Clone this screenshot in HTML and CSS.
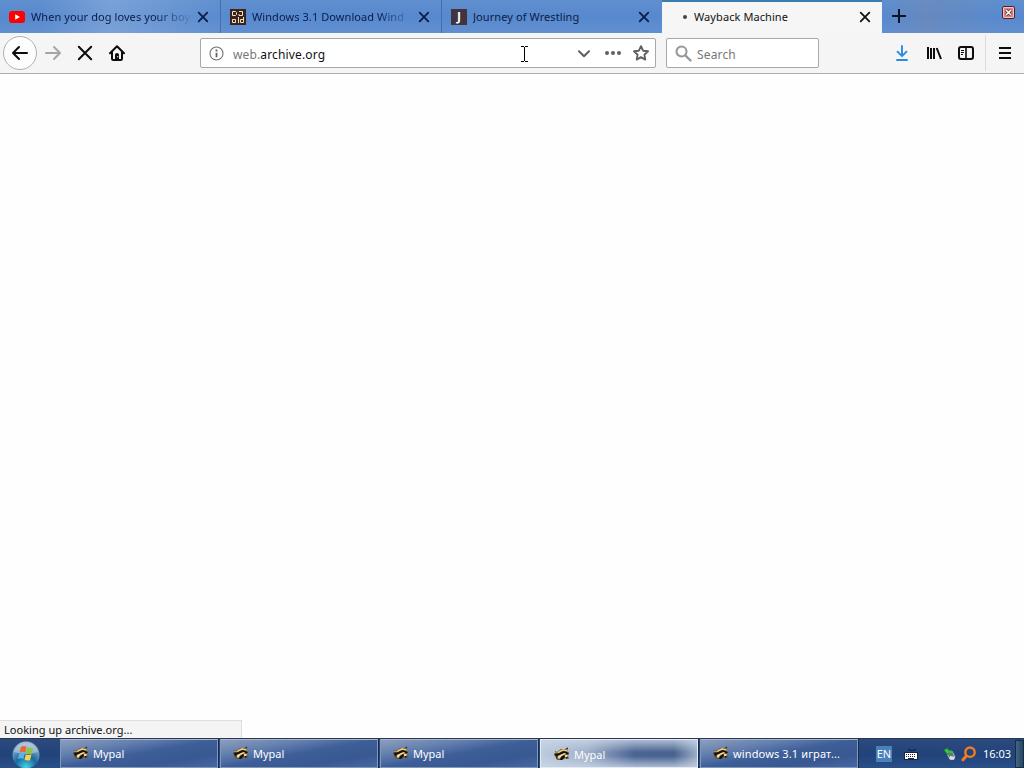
FILE: index.html
```html
<!DOCTYPE html>
<html lang="en">
<head>
  <meta charset="UTF-8">
  <title>Wayback Machine</title>
  <link rel="stylesheet" href="styles.css">
</head>
<body>

  <!-- shared icons -->
  <svg class="defs">
    <symbol id="close" viewBox="0 0 12 12"><path d="M1.700 1.700l8.600 8.600M10.300 1.700l-8.600 8.600" fill="none" stroke="currentColor" stroke-width="1.800" stroke-linecap="round"/></symbol>
    <symbol id="raccoon" viewBox="0 0 16 16">
      <path d="M1 5l2 1 4-3 4 0 3-2-1 3 2 3-1 3 1 3-3-1-2 1-2 1-4 0-2-1 0-3-3-1 2-2z" fill="#6b542f"/>
      <path d="M5 5l4-2 4 1 1 2-3-1-3 1-4 2-1-1z" fill="#e6c681"/>
      <path d="M1 8l4-1 4-2 4 1 2 2-3 0-2-1-3 2-4 1-1 2z" fill="#17130e"/>
      <path d="M4 10l4-2 3-1 1 1-4 2-3 3-1-1zM11 9l3 0-1 2-2 0zM1 6l2 0-1 1z" fill="#f3d99b"/>
      <path d="M7 11l3-2 1 1-1 2-2 2-2 0zM13 2l1 0-1 2zM12 11l2 1-2 1z" fill="#15110d"/>
    </symbol>
  </svg>

  <div class="tabs">
    <div class="tab">
      <svg class="favicon" viewBox="0 0 16 16"><rect x="0" y="2" width="16" height="12" rx="3" fill="#f00"/><path d="M6.200 5.200v5.600L11 8z" fill="#fff"/></svg>
      <span class="title fade">When your dog loves your boy</span>
      <svg class="close"><use href="#close"/></svg>
    </div>
    <div class="tab">
      <svg class="favicon" viewBox="0 0 16 16"><rect width="16" height="16" fill="#39231a"/><path d="M2.500 2.500h3l1 1v2l-1 1h-3zM9 2.500h3.500v4h-3.500v-1.500M2.500 10.500h3v3h-3zM8.500 8v6M13.500 8v5.500h-3v-3h3" fill="none" stroke="#f4e3c4"/></svg>
      <span class="title fade">Windows 3.1 Download Wind</span>
      <svg class="close"><use href="#close"/></svg>
    </div>
    <div class="tab">
      <span class="favicon letter">J</span>
      <span class="title">Journey of Wrestling</span>
      <svg class="close"><use href="#close"/></svg>
    </div>
    <div class="tab active">
      <span class="dot"></span>
      <span class="title">Wayback Machine</span>
      <svg class="close"><use href="#close"/></svg>
    </div>
    <svg class="new-tab" viewBox="0 0 14 14"><path d="M7 .5v13M.5 7h13" stroke="#0b1326" stroke-width="2" fill="none" stroke-linecap="round"/></svg>
    <svg class="win-close" viewBox="0 0 13 13"><rect x=".5" y=".5" width="12" height="12" rx="1.500" fill="#f5c4c0" stroke="#4e1e2b"/><rect x="2" y="2" width="9" height="9" fill="#d98482"/><path d="M4 4l5 5M9 4l-5 5" stroke="#51202a" stroke-width="3"/><path d="M4 4l5 5M9 4l-5 5" stroke="#fff" stroke-width="1.600"/></svg>
  </div>

  <div class="toolbar">
    <div class="back"><svg width="18" height="16" viewBox="0 0 18 16"><path d="M8 2L2 8l6 6M2 8h14" fill="none" stroke="#0c0c0d" stroke-width="2" stroke-linecap="round" stroke-linejoin="round"/></svg></div>
    <svg class="forward" width="18" height="16" viewBox="0 0 18 16"><path d="M9 2l6 6-6 6M15 8H1" fill="none" stroke="#a5a5a6" stroke-width="2" stroke-linecap="round" stroke-linejoin="round"/></svg>
    <svg class="stop" width="16" height="16" viewBox="0 0 16 16"><path d="M1.800 1.800l12.400 12.400M14.200 1.800L1.800 14.200" stroke="#0c0c0d" stroke-width="2" stroke-linecap="round"/></svg>
    <svg class="home" width="16" height="16" viewBox="0 0 16 16"><path d="M1 8.300L8 1.300l7 7M3 7.500v6.200q0 1.300 1.300 1.300h7.400q1.300 0 1.300-1.300V7.500" fill="none" stroke="#0c0c0d" stroke-width="2" stroke-linecap="round" stroke-linejoin="round"/><path d="M6 15V9.500Q6 8 8 8t2 1.500V15z" fill="#0c0c0d"/><rect x="8.200" y="11" width="1" height="1.300" fill="#f5f5f5"/></svg>

    <div class="urlbar">
      <svg class="info" width="15" height="15" viewBox="0 0 15 15"><circle cx="7.500" cy="7.500" r="6.500" fill="none" stroke="#707073" stroke-width="1.100"/><path d="M7.500 6.700v4.500M7.500 3.500v2" stroke="#606063" stroke-width="1.800"/></svg>
      <span class="url"><span class="sub">web.</span>archive.org</span>
      <svg class="caret" width="9" height="16" viewBox="0 0 9 16"><path d="M1 .5h2.500l1 1 1-1H8M4.500 1.500v13M1 15.500h2.500l1-1 1 1H8" fill="none" stroke="#000" shape-rendering="crispEdges"/></svg>
      <svg class="drop" width="12" height="8" viewBox="0 0 12 8"><path d="M1 1.200l5 5 5-5" fill="none" stroke="#606064" stroke-width="2" stroke-linecap="round" stroke-linejoin="round"/></svg>
      <svg class="dots" width="16" height="4" viewBox="0 0 16 4"><g fill="#606064"><circle cx="2" cy="2" r="2"/><circle cx="8" cy="2" r="2"/><circle cx="14" cy="2" r="2"/></g></svg>
      <svg class="star" width="16" height="16" viewBox="0 0 16 16"><path d="M8 1.200l2.100 4.500 4.900.6-3.600 3.400.9 4.900L8 12.200l-4.300 2.400.9-4.900L1 6.300l4.900-.6z" fill="none" stroke="#606064" stroke-width="1.900" stroke-linejoin="round"/></svg>
    </div>

    <div class="search">
      <svg width="17" height="17" viewBox="0 0 17 17"><circle cx="6.500" cy="6.500" r="5" fill="none" stroke="#98989a" stroke-width="2.100"/><path d="M10.300 10.300l5.200 5.200" stroke="#98989a" stroke-width="2.400" stroke-linecap="round"/></svg>
      <span>Search</span>
    </div>

    <div class="actions">
      <svg width="14" height="16" viewBox="0 0 14 16"><path d="M7 1v10M2.500 6.700L7 11.200l4.500-4.500M2 15h10" fill="none" stroke="#2b8ae2" stroke-width="1.900" stroke-linecap="round" stroke-linejoin="round"/></svg>
      <svg class="library" width="16" height="16" viewBox="0 0 16 16"><path d="M2 2v12M5 3v11M8 3v11M10.700 3L15 14" fill="none" stroke="#0c0c0d" stroke-width="2"/></svg>
      <svg class="sidebar" width="16" height="14" viewBox="0 0 16 14"><rect x="1" y="1" width="14" height="12" rx="2" fill="none" stroke="#0c0c0d" stroke-width="2"/><path d="M8 1v12" stroke="#0c0c0d" stroke-width="1.600"/><path d="M3 4.500h3M3 6.500h3M3 8.500h2" stroke="#0c0c0d"/></svg>
      <span class="divider"></span>
      <svg width="12" height="12" viewBox="0 0 12 12"><path d="M0 1h12M0 6h12M0 11h12" stroke="#0c0c0d" stroke-width="2"/></svg>
    </div>
  </div>

  <div class="page">
    <div class="status"><span>Looking up archive.org...</span></div>
  </div>

  <div class="taskbar">
    <div class="start">
      <svg width="28" height="28" viewBox="0 0 28 28">
        <defs><radialGradient id="orb" cx=".5" cy=".95" r=".9"><stop offset="0" stop-color="#45d2ec"/><stop offset=".45" stop-color="#1b6a9b"/><stop offset="1" stop-color="#a2bad3"/></radialGradient></defs>
        <circle cx="14" cy="15" r="13.500" fill="url(#orb)"/>
        <path d="M2 12a12.500 12.500 0 0 1 24 0q-12 4-24 0z" fill="#c6d7e6" opacity=".55"/>
        <path d="M9 7q3-2 5.500 0l-1.300 5.500q-3-1.500-5.700.2z" fill="#f0642c"/>
        <path d="M15.600 7.500q2.800 1.500 5.600.3l-1.600 5.700q-2.500 1.200-5.300-.4z" fill="#8cc63c"/>
        <path d="M7.200 13.700q2.800-1.800 5.600-.2l-1.400 5.500q-2.800-1.400-5.600.2z" fill="#55b3ee"/>
        <path d="M13.900 14.200q2.800 1.500 5.500.4L18 20.200q-2.800 1-5.500-.6z" fill="#ffd147"/>
      </svg>
    </div>
    <div class="task"><svg><use href="#raccoon"/></svg><span>Mypal</span></div>
    <div class="task"><svg><use href="#raccoon"/></svg><span>Mypal</span></div>
    <div class="task"><svg><use href="#raccoon"/></svg><span>Mypal</span></div>
    <div class="task current"><svg><use href="#raccoon"/></svg><span>Mypal</span></div>
    <div class="task"><svg><use href="#raccoon"/></svg><span class="wide">windows 3.1 играт...</span></div>
    <div class="tray">
      <span class="lang">EN</span>
      <svg class="keyboard" width="14" height="12" viewBox="0 0 14 12"><path d="M4 1.500h2v1h4v-1h2" fill="none" stroke="#15213b"/><rect x=".5" y="4.500" width="13" height="7" fill="#fff" stroke="#182542"/><path d="M2 6.500h10M2 8.500h10" stroke="#17243f" stroke-dasharray="1 1"/><path d="M4 10.500h6" stroke="#17243f"/></svg>
      <svg class="usb" width="14" height="14" viewBox="0 0 14 14"><path d="M4 5l5-1 3 6-4 3-3-4z" fill="#697981" stroke="#d8dfdf" stroke-width=".7"/><path d="M7 9l5 1-1 3-5-1z" fill="#dedfd5"/><path d="M1 3l4-2v2l4 1v3L5 6v2z" fill="#3bc642" stroke="#188a32" stroke-width=".6"/></svg>
      <svg class="finder" width="15" height="16" viewBox="0 0 15 16"><circle cx="9" cy="6.200" r="4.700" fill="none" stroke="#f47c21" stroke-width="2.400"/><path d="M5.500 9.800L2 13.800" stroke="#f47c21" stroke-width="3" stroke-linecap="round"/></svg>
      <span class="clock">16:03</span>
      <span class="desktop"></span>
    </div>
  </div>

</body>
</html>
```

FILE: styles.css
```css
* {
  box-sizing: border-box;
}
body {
  margin: 0;
  width: 1024px;
  height: 768px;
  overflow: hidden;
  display: flex;
  flex-direction: column;
  background: #fefefe;
  font-family: "Noto Sans", sans-serif;
  font-size: 11px;
  color: #111;
}
svg {
  display: block;
  flex: none;
}
.defs {
  position: absolute;
  width: 0;
  height: 0;
}

/* tabs */
.tabs {
  display: flex;
  height: 33px;
  flex: none;
  background: linear-gradient(to right, rgba(91,141,211,0) 0, rgba(91,141,211,0) 40px, rgba(160,190,228,0.4) 110px, rgba(91,141,211,0) 230px, rgba(91,141,211,0) 882px, rgba(112,137,181,0.6) 925px, rgba(91,141,211,0) 1000px), linear-gradient(#608fce, #5789ce 50%, #628fd0);
}
.tab {
  display: flex;
  align-items: center;
  width: 221px;
  flex: none;
  padding: 1px 11px 0 9px;
  border-right: 1px solid #416fae;
  color: #0b1c48;
}
.tab:nth-child(3) {
  width: 220px;
  padding-right: 12px;
  border-right: 0;
}
.tab.active {
  width: 220px;
  margin-top: 2px;
  padding: 0 11px 1px 21px;
  background: #f6f6f6;
  border-right: 0;
  color: #111;
  box-shadow: 0 -2px #397cae;
}
.favicon {
  width: 16px;
  height: 16px;
  margin-right: 6px;
  flex: none;
}
.letter {
  background: #41333f;
  color: #fff;
  font-size: 12px;
  font-weight: bold;
  line-height: 15px;
  text-align: center;
}
.title {
  flex: 1;
  padding-bottom: 2px;
  overflow: hidden;
  white-space: nowrap;
  letter-spacing: 0.08px;
}
.fade {
  -webkit-mask-image: linear-gradient(to right, #000 125px, transparent 162px);
  mask-image: linear-gradient(to right, #000 125px, transparent 162px);
}
.close {
  width: 12px;
  height: 12px;
  margin-left: 7px;
}
.dot {
  width: 4px;
  height: 4px;
  margin-right: 7px;
  border-radius: 50%;
  background: #444;
}
.new-tab {
  width: 14px;
  height: 14px;
  margin: 9px 0 0 10px;
}
.win-close {
  width: 13px;
  height: 13px;
  margin: 6px 9px 0 auto;
}

/* toolbar */
.toolbar {
  display: flex;
  align-items: center;
  height: 41px;
  flex: none;
  padding-left: 3px;
  background: #f5f5f6;
  border-bottom: 1px solid #adadad;
}
.back {
  display: flex;
  align-items: center;
  justify-content: center;
  width: 34px;
  height: 34px;
  border: 1px solid #b1b1b1;
  border-radius: 50%;
  background: #fdfdfd;
}
.forward {
  margin-left: 8px;
}
.stop {
  margin-left: 14px;
}
.home {
  margin-left: 16px;
}
.urlbar, .search {
  display: flex;
  align-items: center;
  height: 30px;
  border: 1px solid #a8a8a8;
  border-radius: 2px;
  background: #fff;
  font-size: 12px;
}
.urlbar {
  width: 456px;
  margin-left: 75px;
  padding: 0 6px 0 8px;
}
.url {
  width: 287px;
  margin-left: 9px;
  padding-top: 2px;
  letter-spacing: 0.14px;
}
.sub {
  color: #777;
}
.caret {
  margin-top: 2px;
}
.drop {
  margin: 1px 0 0 49px;
}
.dots {
  margin-left: 15px;
}
.star {
  margin-left: 12px;
}
.search {
  width: 153px;
  margin-left: 10px;
  padding-left: 8px;
  color: #777;
}
.search span {
  margin-left: 5px;
  padding-top: 2px;
  letter-spacing: 0.15px;
}
.actions {
  display: flex;
  align-items: center;
  height: 100%;
  margin-left: auto;
  padding-right: 13px;
}
.library {
  margin-left: 17px;
}
.sidebar {
  margin-left: 16px;
}
.divider {
  width: 1px;
  height: 36px;
  margin: 0 13px 0 11px;
  background: #dcdcdc;
}

/* page */
.page {
  flex: 1;
  display: flex;
  align-items: flex-end;
}
.status {
  width: 242px;
  height: 18px;
  padding-left: 4px;
  border: 1px solid #dedede;
  border-width: 1px 1px 0 0;
  background: #f4f4f4;
  line-height: 18px;
  letter-spacing: 0.04px;
}

/* taskbar */
.taskbar {
  display: flex;
  height: 30px;
  flex: none;
  border-top: 1px solid #293753;
  background: linear-gradient(#2c4a7e, #21437a 55%, #29508a);
  color: #fff;
}
.start {
  width: 60px;
  padding: 1px 0 0 12px;
  overflow: hidden;
}
.task {
  display: flex;
  align-items: center;
  width: 158px;
  height: 29px;
  margin-right: 2px;
  padding: 0 0 1px 12px;
  border: 1px solid #8299bd;
  border-top-color: #a9b7cf;
  box-shadow: 1px 0 #182b50;
  background: linear-gradient(170deg, #8c9ebd 0, #637fae 28%, #3e5e98 50%, #385892 75%, #4668a2 100%);
}
.task svg {
  width: 16px;
  height: 16px;
  margin-right: 4px;
}
.task.current {
  padding: 1px 0 0 13px;
  border-color: #e4ebf4;
  background: linear-gradient(rgba(205,216,232,0.75), rgba(205,216,232,0) 45%, rgba(205,216,232,0) 60%, rgba(205,216,232,0.75)), linear-gradient(to right, #bdcbdd, #9fb0ca 30%, #4b6593 60%, #48638f 85%, #9cadc7);
}
.wide {
  letter-spacing: 0.13px;
}
.tray {
  flex: 1;
  display: flex;
  align-items: center;
  padding-left: 16px;
}
.lang {
  width: 16px;
  height: 16px;
  background: #4b80bb;
  line-height: 16px;
  text-align: center;
}
.keyboard {
  margin-left: 12px;
}
.usb {
  margin-left: 25px;
}
.finder {
  margin-left: 4px;
}
.clock {
  margin-left: 7px;
  padding-bottom: 1px;
}
.desktop {
  width: 9px;
  height: 28px;
  margin-left: auto;
  border: 1px solid #172b4d;
  background: linear-gradient(to right, #456481, #244764);
}
```
